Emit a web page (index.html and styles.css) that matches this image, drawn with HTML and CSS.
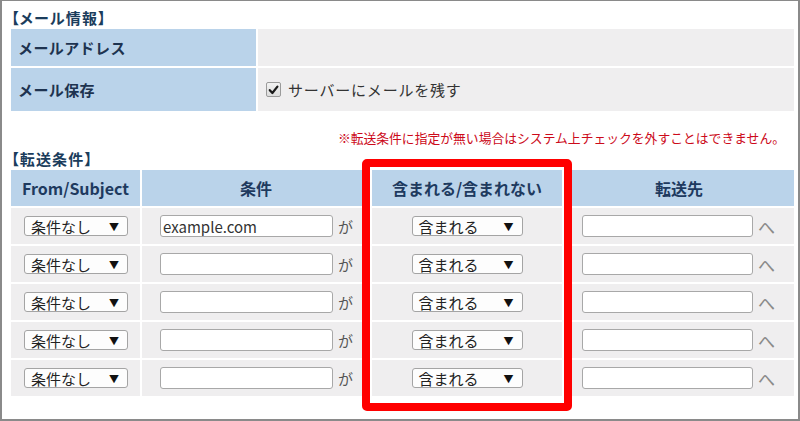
FILE: index.html
```html
<!DOCTYPE html>
<html lang="ja">
<head>
<meta charset="utf-8">
<title>メール設定</title>
<link rel="stylesheet" href="styles.css">
</head>
<body>
<div class="frame">
  <div class="title first">【メール情報】</div>
  <div class="info">
    <div class="label">メールアドレス</div>
    <div class="value"></div>
    <div class="label">メール保存</div>
    <div class="value">
      <span class="check"><svg viewBox="0 0 14 14" width="14" height="14"><path d="M3 7.2 L5.8 10.2 L11.2 3.4" fill="none" stroke="#1a1a1a" stroke-width="2.4" stroke-linecap="round" stroke-linejoin="round"/></svg></span>
      <span class="check-text">サーバーにメールを残す</span>
    </div>
  </div>
  <div class="note">※転送条件に指定が無い場合はシステム上チェックを外すことはできません。</div>
  <div class="title">【転送条件】</div>
  <div class="rules">
    <div class="head">From/Subject</div>
    <div class="head">条件</div>
    <div class="head">含まれる/含まれない</div>
    <div class="head">転送先</div>

    <div class="cell c1"><div class="sel sel-a"><span>条件なし</span><span class="arrow">▼</span></div></div>
    <div class="cell c2"><input class="txt txt-a" type="text" value="example.com"><span class="suffix">が</span></div>
    <div class="cell c3"><div class="sel sel-b"><span>含まれる</span><span class="arrow">▼</span></div></div>
    <div class="cell c4"><input class="txt txt-b" type="text" value=""><span class="suffix he">へ</span></div>

    <div class="cell c1"><div class="sel sel-a"><span>条件なし</span><span class="arrow">▼</span></div></div>
    <div class="cell c2"><input class="txt txt-a" type="text" value=""><span class="suffix">が</span></div>
    <div class="cell c3"><div class="sel sel-b"><span>含まれる</span><span class="arrow">▼</span></div></div>
    <div class="cell c4"><input class="txt txt-b" type="text" value=""><span class="suffix he">へ</span></div>

    <div class="cell c1"><div class="sel sel-a"><span>条件なし</span><span class="arrow">▼</span></div></div>
    <div class="cell c2"><input class="txt txt-a" type="text" value=""><span class="suffix">が</span></div>
    <div class="cell c3"><div class="sel sel-b"><span>含まれる</span><span class="arrow">▼</span></div></div>
    <div class="cell c4"><input class="txt txt-b" type="text" value=""><span class="suffix he">へ</span></div>

    <div class="cell c1"><div class="sel sel-a"><span>条件なし</span><span class="arrow">▼</span></div></div>
    <div class="cell c2"><input class="txt txt-a" type="text" value=""><span class="suffix">が</span></div>
    <div class="cell c3"><div class="sel sel-b"><span>含まれる</span><span class="arrow">▼</span></div></div>
    <div class="cell c4"><input class="txt txt-b" type="text" value=""><span class="suffix he">へ</span></div>

    <div class="cell c1"><div class="sel sel-a"><span>条件なし</span><span class="arrow">▼</span></div></div>
    <div class="cell c2"><input class="txt txt-a" type="text" value=""><span class="suffix">が</span></div>
    <div class="cell c3"><div class="sel sel-b"><span>含まれる</span><span class="arrow">▼</span></div></div>
    <div class="cell c4"><input class="txt txt-b" type="text" value=""><span class="suffix he">へ</span></div>
  </div>
  <div class="highlight"></div>
</div>
</body>
</html>
```

FILE: styles.css
```css
html, body {
  margin: 0;
  padding: 0;
  background: #ffffff;
}

body {
  font-family: "Noto Sans CJK JP", "Noto Sans", sans-serif;
  color: #222;
}

.frame {
  position: relative;
  width: 800px;
  height: 421px;
  box-sizing: border-box;
  border: 2px solid #8a8a8a;
  border-top-width: 1px;
  padding: 0 4px 0 9px;
  overflow: hidden;
}

.title {
  font-size: 15px;
  font-weight: 700;
  color: #1b3d5c;
  line-height: 23px;
  height: 23px;
  font-feature-settings: "palt";
  letter-spacing: 1.2px;
}

.title.first {
  padding-top: 5px;
}

.info {
  display: grid;
  grid-template-columns: 245px 1fr;
  grid-template-rows: 37px 43px;
  gap: 2px;
}

.label {
  background: #bad3ea;
  display: flex;
  align-items: center;
  padding-left: 7px;
  font-size: 15px;
  font-weight: 700;
  color: #1e3350;
  letter-spacing: 0.4px;
}

.value {
  background: #efeeef;
  display: flex;
  align-items: center;
  padding-left: 8px;
}

.check {
  width: 15px;
  height: 15px;
  box-sizing: border-box;
  border: 1px solid #9a9a9a;
  border-radius: 2px;
  background: linear-gradient(#f2f2f2, #dcdcdc);
  display: flex;
  align-items: center;
  justify-content: center;
}

.check-text {
  margin-left: 7px;
  font-size: 15px;
  color: #333;
  letter-spacing: 0.8px;
}

.note {
  margin-top: 18px;
  height: 18px;
  line-height: 18px;
  text-align: right;
  padding-right: 9px;
  font-size: 12.8px;
  color: #cc0a1a;
}

.rules {
  display: grid;
  grid-template-columns: 129px 228px 190px 230px;
  grid-template-rows: 36px repeat(5, 36px);
  gap: 2px;
}

.head {
  background: #bad3ea;
  display: flex;
  align-items: center;
  justify-content: center;
  font-size: 16px;
  font-weight: 700;
  color: #1e3a5f;
}

.cell {
  background: #efeeef;
  display: flex;
  align-items: center;
}

.c1 { padding-left: 13px; }
.c2 { padding-left: 18px; }
.c3 { justify-content: center; }
.c4 { padding-left: 18px; }

.sel {
  height: 20px;
  box-sizing: border-box;
  border: 1px solid #a4a4a4;
  border-radius: 3px;
  background: #fdfdfd;
  display: flex;
  align-items: center;
  justify-content: space-between;
  padding: 0 8px 0 6px;
  font-size: 15px;
  color: #222;
}

.sel-a { width: 104px; }
.sel-b { width: 111px; }

.arrow {
  font-size: 10px;
  color: #111;
}

.txt {
  height: 22px;
  box-sizing: border-box;
  border: 1px solid #a8a8a8;
  border-radius: 3px;
  background: #fff;
  margin: 0;
  padding: 0 2px;
  font-family: "Noto Sans CJK JP", "Noto Sans", sans-serif;
  font-size: 15px;
  color: #333;
  outline: none;
}

.txt-a { width: 173px; }
.txt-b { width: 171px; }

.suffix {
  margin-left: 5px;
  font-size: 15px;
  color: #555;
}

.suffix.he {
  color: #8a8a8a;
  font-size: 17px;
}

.highlight {
  position: absolute;
  left: 360px;
  top: 158px;
  width: 210px;
  height: 252px;
  box-sizing: border-box;
  border: 8px solid #ff0000;
  border-radius: 5px;
}
```
